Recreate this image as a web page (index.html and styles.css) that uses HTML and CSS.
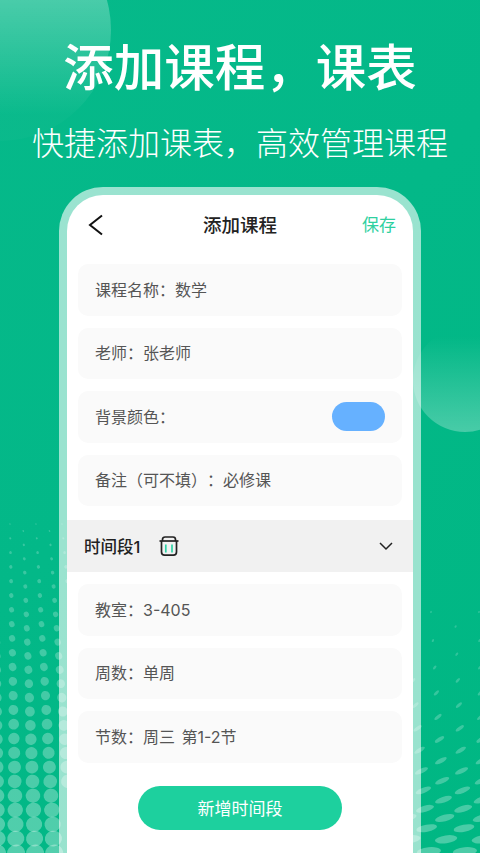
FILE: index.html
```html
<!DOCTYPE html>
<html lang="zh-CN">
<head>
<meta charset="utf-8">
<title>添加课程</title>
<link rel="stylesheet" href="styles.css">
</head>
<body>
<main class="poster">
  <div class="circle circle-top"></div>
  <div class="circle circle-right"></div>
  <svg id="dots" class="dots" width="480" height="853" viewBox="0 0 480 853" aria-hidden="true"></svg>
  <h1 class="title">添加课程，课表</h1>
  <p class="subtitle">快捷添加课表，高效管理课程</p>
  <section class="phone">
    <div class="screen">
      <header class="nav">
        <svg class="back" width="16" height="22" viewBox="0 0 16 22"><path d="M14 1.500 2 11l12 9.500" fill="none" stroke="#111" stroke-width="2"/></svg>
        <h2 class="nav-title">添加课程</h2>
        <span class="save">保存</span>
      </header>
      <div class="group">
        <div class="field">课程名称：数学</div>
        <div class="field">老师：张老师</div>
        <div class="field field-color">背景颜色：<span class="swatch"></span></div>
        <div class="field">备注（可不填）：必修课</div>
      </div>
      <div class="band">
        <span class="band-label">时间段1</span>
        <svg class="trash" width="20" height="22" viewBox="0 0 20 22">
          <path d="M3.500 6V4.500C3.500 3 4.600 2 6 2h8c1.400 0 2.500 1 2.500 2.500V6" fill="none" stroke="#222" stroke-width="1.700"/>
          <path d="M.5 6h19" stroke="#222" stroke-width="1.700"/>
          <path d="M2.500 6v11c0 1.900 1.200 3.100 3.100 3.100h8.800c1.900 0 3.100-1.200 3.100-3.100V6" fill="none" stroke="#222" stroke-width="1.700"/>
          <path d="M6.800 9.500v8M13 9.500v8" stroke="#2fd3a6" stroke-width="1.700"/>
        </svg>
        <svg class="chevron" width="14" height="9" viewBox="0 0 14 9"><path d="m1 1 6 6 6-6" fill="none" stroke="#222" stroke-width="1.500"/></svg>
      </div>
      <div class="group">
        <div class="field">教室：3-405</div>
        <div class="field">周数：单周</div>
        <div class="field">节数：周三 第1-2节</div>
      </div>
      <button class="add" type="button">新增时间段</button>
    </div>
  </section>
</main>
<script src="script.js"></script>
</body>
</html>
```

FILE: styles.css
```css
* { box-sizing: border-box; }
html, body { margin: 0; padding: 0; }
body {
  width: 480px;
  height: 853px;
  overflow: hidden;
  font-family: Inter, "Noto Sans CJK SC", "Noto Sans", sans-serif;
  text-spacing-trim: space-all;
}
.poster {
  position: relative;
  width: 480px;
  height: 853px;
  overflow: hidden;
  display: flex;
  flex-direction: column;
  align-items: center;
  background: linear-gradient(135deg, #06b98a 0%, #03b888 45%, #00b783 100%);
}
.circle { position: absolute; border-radius: 50%; }
.circle-top {
  left: -111px;
  top: -81px;
  width: 222px;
  height: 222px;
  background: linear-gradient(180deg, rgba(255,255,255,.3) 30%, rgba(255,255,255,.02) 88%);
}
.circle-right {
  left: 413px;
  top: 328px;
  width: 104px;
  height: 104px;
  background: linear-gradient(180deg, rgba(255,255,255,0) 8%, rgba(255,255,255,.28) 100%);
}
.dots { position: absolute; left: 0; top: 0; }
.title {
  position: relative;
  margin: 33px 0 0;
  font-size: 50.500px;
  line-height: 70px;
  font-weight: 500;
  color: #fff;
  white-space: nowrap;
}
.subtitle {
  position: relative;
  margin: 18px 0 0;
  font-size: 32px;
  line-height: 46px;
  font-weight: 300;
  color: #fff;
  white-space: nowrap;
}
.phone {
  position: relative;
  flex: none;
  margin-top: 20px;
  width: 362px;
  height: 720px;
  padding: 8px;
  border-radius: 44px;
  background: rgba(255,255,255,.6);
}
.screen {
  height: 100%;
  border-radius: 36px;
  background: #fff;
  display: flex;
  flex-direction: column;
  align-items: stretch;
}
.nav {
  height: 69px;
  padding: 0 17px 9px;
  flex: none;
  display: grid;
  grid-template-columns: 1fr auto 1fr;
  align-items: center;
}
.back { margin-left: 4px; }
.nav-title {
  margin: 0;
  font-size: 18.500px;
  line-height: 26px;
  font-weight: 500;
  color: #222;
}
.save { justify-self: end; font-size: 17px; line-height: 24px; color: #2fd0a0; }
.group {
  display: flex;
  flex-direction: column;
  gap: 12px;
  padding: 0 11px;
}
.field {
  height: 51.500px;
  padding: 0 17px 2px;
  display: flex;
  align-items: center;
  justify-content: space-between;
  font-size: 16px;
  word-spacing: 2px;
  color: #555;
  background: #fafafa;
  border-radius: 10px;
  white-space: pre;
}
.swatch {
  width: 53px;
  height: 29px;
  margin-top: 2px;
  border-radius: 15px;
  background: #66b1ff;
}
.band {
  height: 52px;
  margin: 14px 0 12px;
  padding: 0 20px 0 17px;
  display: flex;
  align-items: center;
  background: #f1f1f1;
}
.band-label { font-size: 16.500px; font-weight: 500; color: #222; }
.trash { margin-left: 19px; }
.chevron { margin-left: auto; }
.add {
  align-self: center;
  width: 204px;
  height: 44px;
  margin-top: 23px;
  border: 0;
  border-radius: 22px;
  background: #1dd09e;
  color: #fff;
  font: 400 17px Inter, "Noto Sans CJK SC", sans-serif;
}
```

FILE: script.js
```js
// Halftone dot fields in the two bottom corners of the poster.
var NS = "http://www.w3.org/2000/svg";
var svg = document.getElementById("dots");
function dot(x, y, rx, ry, rot, op) {
  var e = document.createElementNS(NS, "ellipse");
  e.setAttribute("cx", x.toFixed(1));
  e.setAttribute("cy", y.toFixed(1));
  e.setAttribute("rx", rx.toFixed(1));
  e.setAttribute("ry", ry.toFixed(1));
  e.setAttribute("fill", "#fff");
  e.setAttribute("fill-opacity", op.toFixed(2));
  e.setAttribute("transform", "rotate(" + rot.toFixed(0) + " " + x.toFixed(1) + " " + y.toFixed(1) + ")");
  svg.appendChild(e);
}
// Left field: a staggered grid whose dots swell and spread towards the bottom.
for (var j = 0; j < 24; j++) {
  var y0 = 524 + j * 14.300;
  for (var i = -1; i < 7; i++) {
    var stagger = (i % 2 !== 0) ? 7 : 0;
    var y = y0 + stagger * Math.max(0, 1 - (y0 - 524) / 240);
    var t = Math.min(1.05, Math.max(0, (y - 524) / 326));
    var x = 10 + i * (13 + t * 6) + t * 6;
    var r = 0.7 + 6 * t + 2.400 * t * t;
    if (x > 68 || x < -10) continue;
    dot(x, y, r * (1.02 - t * 0.04), r * (1.2 - t * 0.3), -25 + t * 15, 0.2 + t * 0.12);
  }
}
// Right field: dots flatten and tilt as they near the bottom edge.
var yr = 612, alt = 0;
while (yr < 870) {
  var u = (yr - 612) / 241;
  var g = 48 - u * 12;
  for (var xr = 479 + u * 4 - (alt ? g / 2 : 0); xr > 405; xr -= g) {
    var rx = 1.200 + 11 * Math.pow(u, 1.500);
    var ry = 0.900 + 1.200 * u + 2.200 * u * u * u;
    dot(xr, yr, rx, ry, -65 + 60 * u, 0.17 + u * 0.13);
  }
  yr += 14.500 - 7 * u + (u > 0.8 ? 3 * (u - 0.8) * 10 : 0);
  alt = 1 - alt;
}
```
